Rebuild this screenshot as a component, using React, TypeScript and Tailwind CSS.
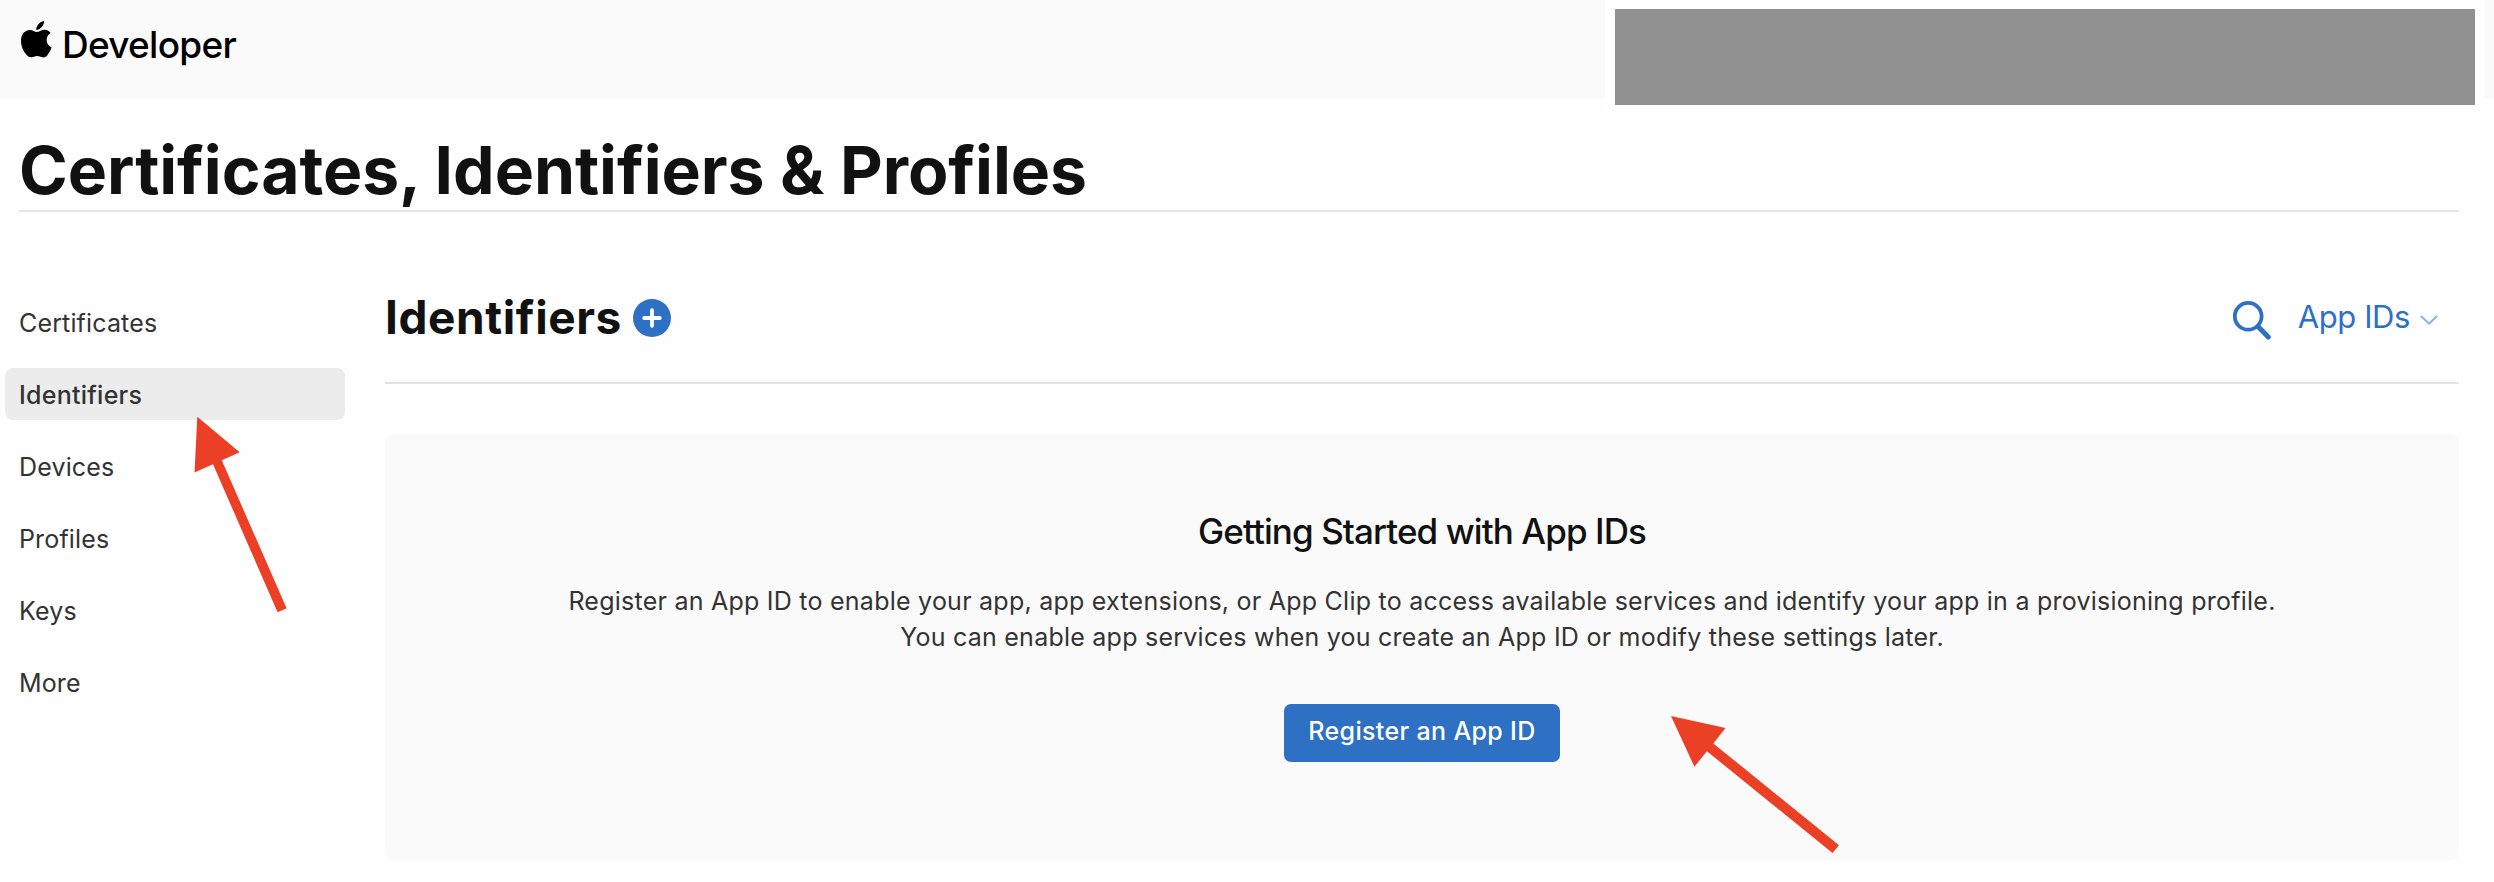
import React from "react";

const navItems = ["Certificates", "Identifiers", "Devices", "Profiles", "Keys", "More"];

function AppleLogo() {
  return (
    <svg viewBox="0 0 93 110" className="h-[36.67px] w-[31px]" fill="#000" aria-hidden="true">
      <path d="M46 27C45 15 56 2 69 0C70 12 59 26 46 27Z" />
      <path d="M47 33C54 33 60 26 71 26C79 26 85 30 89 36C81 41 77 48 77 56C77 68 84 76 92 79C89 88 84 97 79 103C75 108 71 110 65 109C59 108 55 105 48 105C41 105 37 109 31 109C25 110 20 106 15 100C6 89 0 75 0 60C0 39 12 27 27 27C35 27 42 33 47 33Z" />
    </svg>
  );
}

function Header() {
  return (
    <header className="relative flex h-[98px] bg-[#fafafa] pl-[21px] text-black">
      <div className="pt-[21px]">
        <AppleLogo />
      </div>
      <span className="pl-[10px] text-[37px] leading-[89px] font-medium tracking-[-0.74px]">Developer</span>
      <div className="absolute top-0 left-[1605px] h-[114px] w-[880px] bg-white pt-[9px] pl-[10px]">
        <div className="h-[96px] w-[860px] bg-[#919191]" />
      </div>
    </header>
  );
}

function Sidebar() {
  return (
    <nav className="flex w-[340px] flex-col gap-5 pt-[84px]">
      {navItems.map((item) => (
        <a
          key={item}
          className={
            item === "Identifiers"
              ? "h-[52px] rounded-lg bg-[#ececec] pl-[14px] text-[25px] leading-[55px] font-medium tracking-[0.25px]"
              : "h-[52px] rounded-lg pl-[14px] text-[25px] leading-[55px] tracking-[0.15px]"
          }
        >
          {item}
        </a>
      ))}
    </nav>
  );
}

function Toolbar() {
  return (
    <div className="flex h-[130px] items-center border-b-2 border-[#e4e4e4] pr-[21px]">
      <h2 className="-mt-[2px] text-[46px] leading-[56px] font-bold tracking-[0.6px] text-[#111]">Identifiers</h2>
      <svg viewBox="0 0 38 38" className="ml-[11px] size-[38px]" aria-label="Add">
        <circle cx="19" cy="19" r="19" fill="#2d70c4" />
        <path d="M19 11.2v15.6M11.2 19h15.6" stroke="#fff" strokeWidth="3.8" strokeLinecap="round" />
      </svg>
      <div className="ml-auto flex items-center text-[#2d70c4]">
        <svg viewBox="0 0 38 39" className="mt-[4px] h-[39px] w-[38px]" fill="none" stroke="currentColor" aria-label="Search">
          <circle cx="15.2" cy="15.3" r="13.4" strokeWidth="3.8" />
          <path d="M25 25.5L35.3 36" strokeWidth="5" strokeLinecap="round" />
        </svg>
        <span className="-mt-[2px] ml-[27px] text-[31px] leading-10 tracking-[-0.42px]">App IDs</span>
        <svg viewBox="0 0 18 11" className="mt-[4px] ml-[10px] h-[11px] w-[18px]" fill="none" aria-hidden="true">
          <path d="M1.5 1.5L9 8.6L16.5 1.5" stroke="#96b7e1" strokeWidth="2.3" strokeLinecap="round" strokeLinejoin="round" />
        </svg>
      </div>
    </div>
  );
}

function EmptyState() {
  return (
    <section className="mt-[50px] flex h-[426px] flex-col items-center rounded-[8px] bg-[#fafafa] pt-[73px] text-center">
      <h3 className="text-[35px] leading-[48px] font-medium tracking-[-0.91px] text-[#111]">Getting Started with App IDs</h3>
      <p className="mt-7 text-[25px] leading-9 tracking-[0.242px] whitespace-nowrap">
        Register an App ID to enable your app, app extensions, or App Clip to access available services and identify your app in a provisioning profile.
        <br />
        You can enable app services when you create an App ID or modify these settings later.
      </p>
      <button className="mt-[49px] h-[58px] w-[276px] rounded-[7px] bg-[#2d70c4] pb-1 text-[25px] leading-[54px] font-medium tracking-[0.34px] text-white">
        Register an App ID
      </button>
    </section>
  );
}

function Arrows() {
  return (
    <svg viewBox="0 0 2494 882" className="pointer-events-none absolute inset-0 h-[882px] w-[2494px]" fill="#eb4025" aria-hidden="true">
      <path d="M197.3 416.7L239.7 452.3L221.8 460.3L286.6 608.3L277.6 612.2L213 464.2L194.5 472.4Z" />
      <path d="M1671 716L1725.5 728L1713.3 743.4L1839 845.2L1832.5 853L1706.9 751.2L1694.4 766.7Z" />
    </svg>
  );
}

export default function App() {
  return (
    <div className="relative h-[882px] w-[2494px] overflow-hidden bg-[#fefefe] font-['Inter',sans-serif] text-[#333]">
      <Header />
      <div className="mr-[35px] ml-[19px] border-b-2 border-[#e4e4e4] pt-9 pb-1">
        <h1 className="text-[66px] leading-[72px] font-bold tracking-[-0.05px] text-[#111]">Certificates, Identifiers &amp; Profiles</h1>
      </div>
      <div className="flex gap-10 pr-[35px] pl-[5px]">
        <Sidebar />
        <main className="flex-1 pt-[42px]">
          <Toolbar />
          <EmptyState />
        </main>
      </div>
      <Arrows />
    </div>
  );
}
